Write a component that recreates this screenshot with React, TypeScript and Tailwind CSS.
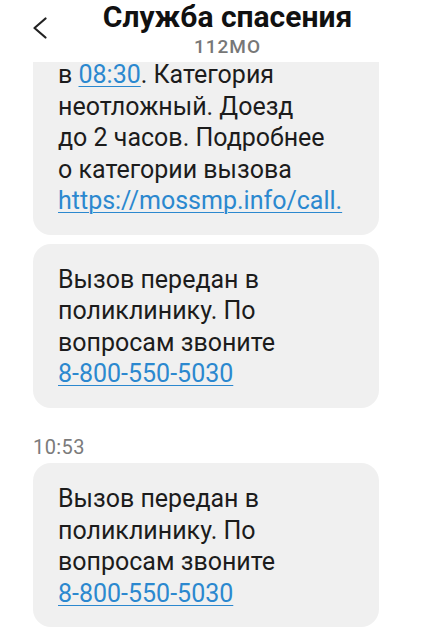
import React from "react";

const messages = [
  {
    id: "m2",
    lines: ["Вызов передан в", "поликлинику. По", "вопросам звоните"],
    phone: "8-800-550-5030",
  },
];

function Link({ children }: { children: React.ReactNode }) {
  return (
    <span className="text-[#2b88cf] underline decoration-1 underline-offset-[3px]">
      {children}
    </span>
  );
}

function ForwardedBubble({ className }: { className?: string }) {
  const msg = messages[0];
  return (
    <div
      className={`ml-[33px] w-[346px] rounded-[18px] bg-[#f0f0f0] pt-[20px] pb-[18px] pl-[25px] ${className ?? ""}`}
    >
      {msg.lines.map((l) => (
        <div key={l} className="whitespace-nowrap">
          {l}
        </div>
      ))}
      <div className="whitespace-nowrap">
        <Link>{msg.phone}</Link>
      </div>
    </div>
  );
}

export default function App() {
  return (
    <div className="h-[640px] w-[446px] overflow-hidden bg-white font-['Roboto',sans-serif]">
      {/* Header */}
      <div className="relative z-10 grid h-[62px] grid-cols-[80px_1fr_71px] bg-white">
        <div className="pl-[33px] pt-[17px]">
          <svg width="14" height="22" viewBox="0 0 14 22" fill="none">
            <polyline
              points="12.5,1.5 1.5,11 12.5,20.5"
              stroke="#222"
              strokeWidth="2.2"
              strokeLinecap="round"
              strokeLinejoin="round"
            />
          </svg>
        </div>
        <div className="flex flex-col items-center">
          <div className="whitespace-nowrap text-[30px] leading-[34px] font-bold text-[#111]">
            Служба спасения
          </div>
          <div className="mt-[2px] text-[19px] leading-[22px] font-medium tracking-[1px] text-[#777]">
            112МО
          </div>
        </div>
        <div />
      </div>

      {/* Messages */}
      <div className="text-[25px] leading-[31.5px] text-[#1c1c1c]">
        <div className="-mt-[3px] ml-[33px] w-[346px] rounded-b-[18px] bg-[#f0f0f0] pb-[18px] pl-[25px]">
          <div className="whitespace-nowrap">
            в <Link>08:30</Link>. Категория
          </div>
          <div className="whitespace-nowrap">неотложный. Доезд</div>
          <div className="whitespace-nowrap">до 2 часов. Подробнее</div>
          <div className="whitespace-nowrap">о категории вызова</div>
          <div className="whitespace-nowrap">
            <Link>https://mossmp.info/call.</Link>
          </div>
        </div>

        <ForwardedBubble className="mt-[9px]" />

        <div className="mt-[27px] pl-[33px] text-[20px] leading-[24px] tracking-[0.4px] text-[#7b7b7b]">
          10:53
        </div>

        <ForwardedBubble className="mt-[4.5px]" />
      </div>
    </div>
  );
}
